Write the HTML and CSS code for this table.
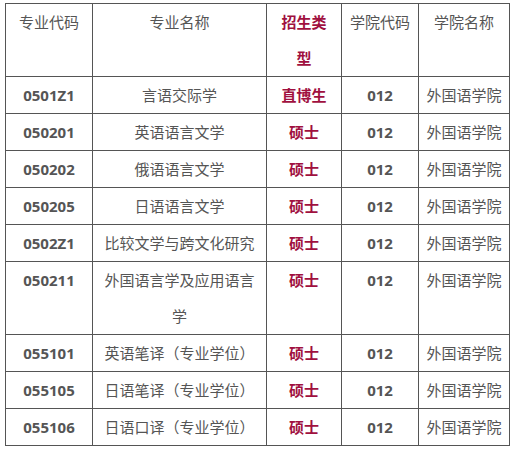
FILE: index.html
```html
<!DOCTYPE html>
<html lang="zh-CN">
<head>
<meta charset="utf-8">
<link rel="stylesheet" href="styles.css">
</head>
<body>
<table class="majors">
  <colgroup>
    <col class="c-code">
    <col class="c-name">
    <col class="c-type">
    <col class="c-dcode">
    <col class="c-dname">
  </colgroup>
  <thead>
    <tr>
      <th>专业代码</th>
      <th>专业名称</th>
      <th class="type">招生类型</th>
      <th>学院代码</th>
      <th>学院名称</th>
    </tr>
  </thead>
  <tbody>
    <tr><td class="code">0501Z1</td><td>言语交际学</td><td class="type">直博生</td><td class="code">012</td><td>外国语学院</td></tr>
    <tr><td class="code">050201</td><td>英语语言文学</td><td class="type">硕士</td><td class="code">012</td><td>外国语学院</td></tr>
    <tr><td class="code">050202</td><td>俄语语言文学</td><td class="type">硕士</td><td class="code">012</td><td>外国语学院</td></tr>
    <tr><td class="code">050205</td><td>日语语言文学</td><td class="type">硕士</td><td class="code">012</td><td>外国语学院</td></tr>
    <tr><td class="code">0502Z1</td><td>比较文学与跨文化研究</td><td class="type">硕士</td><td class="code">012</td><td>外国语学院</td></tr>
    <tr><td class="code">050211</td><td>外国语言学及应用语言学</td><td class="type">硕士</td><td class="code">012</td><td>外国语学院</td></tr>
    <tr><td class="code">055101</td><td>英语笔译（专业学位）</td><td class="type">硕士</td><td class="code">012</td><td>外国语学院</td></tr>
    <tr><td class="code">055105</td><td>日语笔译（专业学位）</td><td class="type">硕士</td><td class="code">012</td><td>外国语学院</td></tr>
    <tr><td class="code">055106</td><td>日语口译（专业学位）</td><td class="type">硕士</td><td class="code">012</td><td>外国语学院</td></tr>
  </tbody>
</table>
</body>
</html>
```
FILE: styles.css
```css
html, body {
  margin: 0;
  padding: 0;
  background: #ffffff;
}

body {
  padding: 3px 0 0 5px;
  font-family: "Noto Sans CJK SC", "Noto Sans", sans-serif;
  font-size: 15px;
  color: #555555;
}

.majors {
  border-collapse: collapse;
  table-layout: fixed;
  width: 504px;
  border: 1px solid #444444;
}

.c-code { width: 87px; }
.c-name { width: 174px; }
.c-type { width: 75px; }
.c-dcode { width: 77px; }
.c-dname { width: 91px; }

.majors th,
.majors td {
  border: 1px solid #555555;
  padding: 0 5px;
  line-height: 36px;
  height: 36px;
  text-align: center;
  vertical-align: top;
  font-weight: normal;
}

.majors .type {
  padding: 0 8px;
  color: #a0103f;
  font-weight: bold;
}

.majors .code {
  font-family: "Open Sans", "Noto Sans", sans-serif;
  font-weight: bold;
  color: #555555;
}
```
